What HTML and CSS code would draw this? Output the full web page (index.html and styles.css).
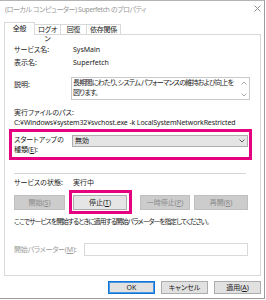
FILE: index.html
```html
<!DOCTYPE html>
<html lang="ja">
<head>
<meta charset="utf-8">
<link rel="stylesheet" href="styles.css">
</head>
<body>
<div class="win">
  <div class="titlebar">
    <span class="title">(ローカル コンピューター) Superfetch のプロパティ</span>
    <svg class="close" width="7" height="7" viewBox="0 0 7 7"><path d="M0.5 0.5L6.5 6.5M6.5 0.5L0.5 6.5" stroke="#8c8c8c" stroke-width="1"/></svg>
  </div>
  <div class="tabs">
    <div class="tab sel">全般</div>
    <div class="tab t2">ログオン</div>
    <div class="tab t3">回復</div>
    <div class="tab t4">依存関係</div>
  </div>
  <div class="panel">
    <div class="row r1"><span class="lbl">サービス名:</span><span class="val">SysMain</span></div>
    <div class="row r2"><span class="lbl">表示名:</span><span class="val">Superfetch</span></div>
    <div class="desc">
      <span class="lbl dlbl">説明:</span>
      <div class="descbox">
        <div class="desctext">長期間にわたり、システム パフォーマンスの維持および向上を<br>図ります。</div>
        <div class="scroll">
          <svg width="6" height="4" viewBox="0 0 6 4"><path d="M0.5 3.5L3 1L5.5 3.5" fill="none" stroke="#a6a6a6" stroke-width="1"/></svg>
          <svg width="6" height="4" viewBox="0 0 6 4"><path d="M0.5 0.5L3 3L5.5 0.5" fill="none" stroke="#a6a6a6" stroke-width="1"/></svg>
        </div>
      </div>
    </div>
    <div class="pathlbl">実行ファイルのパス:</div>
    <div class="path">C:¥Windows¥system32¥svchost.exe -k LocalSystemNetworkRestricted</div>
    <div class="hl startup">
      <span class="lbl2">スタートアップの<br>種類(<u>E</u>):</span>
      <div class="select">
        <span class="seltext">無効</span>
        <span class="arrow"><svg width="6" height="4" viewBox="0 0 6 4"><path d="M0.5 0.5L3 3L5.5 0.5" fill="none" stroke="#606060" stroke-width="1"/></svg></span>
      </div>
    </div>
    <div class="sep"></div>
    <div class="row status"><span class="lbl">サービスの状態:</span><span class="val">実行中</span></div>
    <div class="btnrow">
      <div class="btn dis b1">開始(<u>S</u>)</div>
      <div class="hl hlbtn"><div class="btn stop">停止(<u>T</u>)</div></div>
      <div class="btn dis b3">一時停止(<u>P</u>)</div>
      <div class="btn dis b4">再開(<u>R</u>)</div>
    </div>
    <div class="note">ここでサービスを開始するときに適用する開始パラメーターを指定してください。</div>
    <div class="param"><span class="plbl">開始パラメーター(<u>M</u>):</span><div class="input"></div></div>
  </div>
  <div class="footer">
    <div class="btn fbtn ok">OK</div>
    <div class="btn fbtn">キャンセル</div>
    <div class="btn fbtn">適用(<u>A</u>)</div>
  </div>
</div>
</body>
</html>
```

FILE: styles.css
```css
* { box-sizing: border-box; }
html, body { margin: 0; padding: 0; background: #ffffff; }
body {
  width: 266px; height: 300px; overflow: hidden;
  font-family: "Noto Sans", "Noto Sans CJK JP", sans-serif;
  font-size: 7px; color: #1a1a1a;
  font-feature-settings: "palt";
}
u { text-decoration: underline; text-underline-offset: 1px; }
.win {
  width: 265px; height: 299px;
  border-top: 1px solid #b4b4b4; border-right: 1px solid #9c9c9c; border-bottom: 1px solid #9c9c9c;
  background: #ffffff;
  display: flex; flex-direction: column;
}
.titlebar { height: 21px; display: flex; align-items: flex-start; justify-content: space-between; }
.title { margin-left: 5px; line-height: 18px; color: #9a9a9a; font-size: 7px; letter-spacing: -0.45px; white-space: nowrap; }
.close { margin-top: 4px; margin-right: 3px; }
.tabs { height: 12px; display: flex; align-items: flex-end; padding-left: 4px; position: relative; z-index: 1; }
.tab {
  border: 1px solid #d9d9d9; border-bottom: none; background: #ffffff;
  height: 10px; line-height: 9px; text-align: center; margin-left: -1px; letter-spacing: -0.2px;
}
.tab.sel { height: 13px; margin-bottom: -1px; margin-left: 0; width: 31px; line-height: 12px; padding-bottom: 1px; }
.t2 { width: 27px; }
.t3 { width: 27px; }
.t4 { width: 35px; }
.panel {
  margin-left: 4px; width: 257px; height: 242px;
  border: 1px solid #d9d9d9; background: #ffffff;
  padding-left: 9px;
  display: flex; flex-direction: column;
}
.row { display: flex; height: 12px; line-height: 12px; }
.r1 { margin-top: 9px; }
.r2 { margin-top: 1px; }
.lbl { width: 57px; flex: none; }
.val { padding-left: 2px; }
.desc { display: flex; margin-top: 8px; height: 23px; }
.dlbl { padding-top: 2px; line-height: 12px; }
.descbox { width: 179px; height: 23px; border: 1px solid #c9c9c9; display: flex; }
.desctext { flex: 1; padding-left: 1px; line-height: 10px; letter-spacing: -0.75px; white-space: nowrap; overflow: hidden; }
.scroll { width: 11px; display: flex; flex-direction: column; align-items: center; padding-top: 3px; gap: 8px; }
.scroll svg { display: block; }
.pathlbl { margin-top: 7px; height: 12px; line-height: 12px; }
.path { margin-top: -1px; height: 10px; line-height: 10px; letter-spacing: -0.12px; white-space: nowrap; }
.hl { border: 3px solid #e4007f; }
.startup { margin-top: 1px; margin-left: -5px; width: 243px; height: 31px; display: flex; padding-left: 2px; }
.lbl2 { width: 58px; flex: none; padding-top: 3px; line-height: 10px; }
.select {
  margin-top: 3px; width: 176px; height: 12px;
  border: 1px solid #adadad; background: #e5e5e5;
  display: flex; align-items: center; justify-content: space-between;
}
.seltext { padding-left: 2px; line-height: 10px; }
.arrow { width: 9px; height: 10px; display: flex; align-items: center; justify-content: center; margin-right: 1px; }
.arrow svg { display: block; }
.sep { margin-top: 13px; width: 232px; height: 1px; background: #d5d5d5; }
.status { margin-top: 3px; }
.btnrow { margin-top: 1px; height: 24px; display: flex; align-items: center; }
.btn {
  height: 15px; line-height: 13px; text-align: center;
  border: 1px solid #adadad; background: #e1e1e1; color: #1a1a1a; white-space: nowrap;
}
.btn.dis { background: #cccccc; border-color: #bfbfbf; color: #8a8a8a; }
.b1 { width: 51px; }
.hlbtn { margin-left: 4px; width: 63px; height: 24px; display: flex; align-items: center; padding-left: 1px; }
.stop { width: 54px; background: #e5e5e5; }
.b3 { margin-left: 8px; width: 50px; }
.b4 { margin-left: 4px; width: 54px; }
.note { margin-top: 2px; height: 12px; line-height: 12px; font-size: 6.8px; letter-spacing: -0.95px; white-space: nowrap; }
.param { margin-top: 15px; display: flex; height: 13px; }
.plbl { width: 70px; flex: none; line-height: 13px; color: #9a9a9a; letter-spacing: -0.2px; }
.input { width: 164px; height: 13px; border: 1px solid #d9d9d9; background: #ffffff; }
.footer { margin-top: 5px; display: flex; justify-content: flex-end; gap: 6px; padding-right: 3px; }
.fbtn { width: 47px; height: 13px; line-height: 11px; }
.ok { border-color: #0f74d6; box-shadow: inset 0 0 0 1px #4d98e0; }
```
